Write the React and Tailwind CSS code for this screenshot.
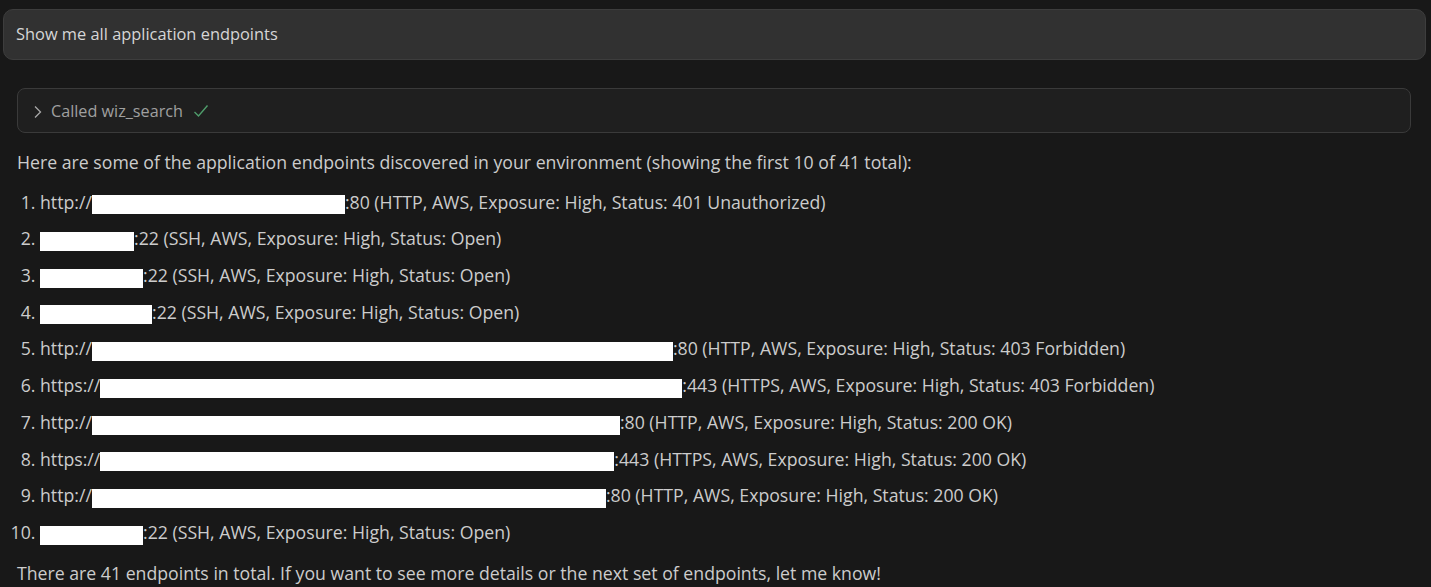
import React from "react";

const rows = [
  { pre: "http://", w: 253, post: ":80 (HTTP, AWS, Exposure: High, Status: 401 Unauthorized)" },
  { pre: "", w: 94, post: ":22 (SSH, AWS, Exposure: High, Status: Open)" },
  { pre: "", w: 103, post: ":22 (SSH, AWS, Exposure: High, Status: Open)" },
  { pre: "", w: 112, post: ":22 (SSH, AWS, Exposure: High, Status: Open)" },
  { pre: "http://", w: 581, post: ":80 (HTTP, AWS, Exposure: High, Status: 403 Forbidden)" },
  { pre: "https://", w: 582, post: ":443 (HTTPS, AWS, Exposure: High, Status: 403 Forbidden)" },
  { pre: "http://", w: 528, post: ":80 (HTTP, AWS, Exposure: High, Status: 200 OK)" },
  { pre: "https://", w: 514, post: ":443 (HTTPS, AWS, Exposure: High, Status: 200 OK)" },
  { pre: "http://", w: 514, post: ":80 (HTTP, AWS, Exposure: High, Status: 200 OK)" },
  { pre: "", w: 103, post: ":22 (SSH, AWS, Exposure: High, Status: Open)" },
];

export default function App() {
  return (
    <div
      className="w-[1431px] h-[587px] overflow-hidden bg-[#181818] text-[#cccccc]"
      style={{ fontFamily: '"Open Sans", "Liberation Sans", sans-serif' }}
    >
      <div className="pt-[9px] pl-[3px] pr-[5px]">
        <div className="h-[51px] rounded-[10px] border border-[#3d3d3d] bg-[#313131] flex items-center pl-[12px] text-[16.4px] text-[#d6d6d6]">
          Show me all application endpoints
        </div>
      </div>

      <div className="pl-[17px] pr-[20px] pt-[28px]">
        <div className="h-[45px] rounded-[8px] border border-[#3a3a3a] bg-[#1f1f1f] flex items-center pt-[2px] pl-[14px] gap-[7px] text-[16.2px] text-[#a0a0a0]">
          <svg width="12" height="16" viewBox="0 0 12 16" className="shrink-0">
            <path d="M3 2.5 L8.5 8 L3 13.5" fill="none" stroke="#a8a8a8" strokeWidth="1.3" />
          </svg>
          <span>Called wiz_search</span>
          <svg width="16" height="16" viewBox="0 0 16 16" className="shrink-0 ml-[3px] -mt-[2px]">
            <path d="M1.5 9 L5.5 13 L14.5 2.5" fill="none" stroke="#4f9d6b" strokeWidth="1.4" />
          </svg>
        </div>
      </div>

      <div className="pl-[17px] text-[17.7px] leading-[24px]">
        <p className="mt-[17px]">
          Here are some of the application endpoints discovered in your environment (showing the first 10 of 41 total):
        </p>
        <ol className="mt-[9.6px] list-decimal pl-[23px]">
          {rows.map((r, i) => (
            <li key={i} className="leading-[36.7px]">
              {r.pre}
              <span
                className="inline-block align-middle bg-white h-[19px] relative top-[1px]"
                style={{ width: r.w }}
              />
              {r.post}
            </li>
          ))}
        </ol>
        <p className="mt-[10.6px]">
          There are 41 endpoints in total. If you want to see more details or the next set of endpoints, let me know!
        </p>
      </div>
    </div>
  );
}
